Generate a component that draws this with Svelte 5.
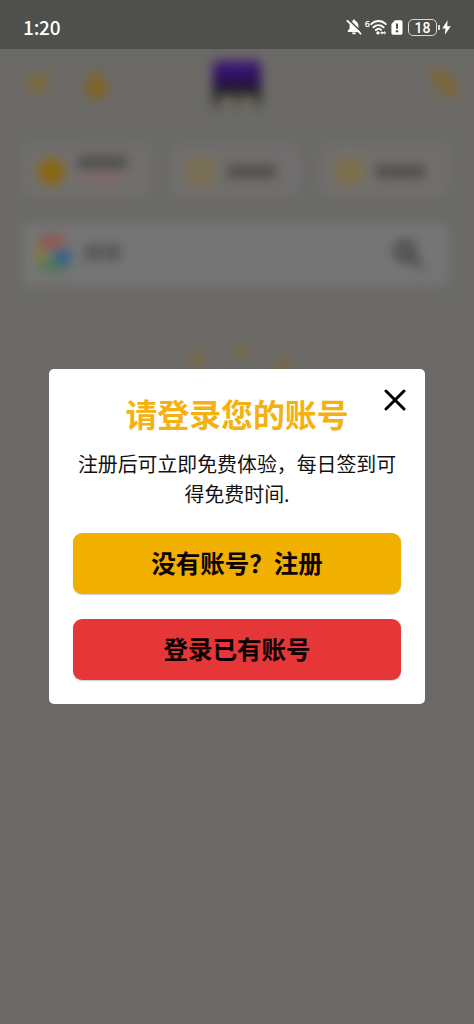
<script>
  // 快捷入口卡片
  const cards = [
    { icon: 'coin', sub: true },
    { icon: 'grid', sub: false },
    { icon: 'share', sub: false },
  ];

  let open = true;
</script>

<div class="screen">
  <!-- 状态栏 -->
  <header class="status">
    <span class="time">1:20</span>
    <div class="status_icons">
      <svg class="mute" width="16" height="16" viewBox="0 0 16 16">
        <path d="M1.8 13V11.6L3.6 9.8V6.5C3.6 4 5 2.4 6.8 1.9V1.4C6.8.2 9.2.2 9.2 1.4V1.9C11 2.4 12.4 4 12.4 6.5V9.8L14.2 11.6V13Z" fill="#fff" />
        <path d="M5.8 13.6H10.2C9.8 16 6.2 16 5.8 13.6Z" fill="#fff" />
        <path d="M2.6 .6L15.6 13.2" stroke="#4f4f4b" stroke-width="1.7" />
        <path d="M1.4 1.8L14.6 14.6" stroke="#fff" stroke-width="1.8" stroke-linecap="round" />
      </svg>
      <span class="six">6</span>
      <svg class="wifi" width="17" height="16" viewBox="0 0 17 16" fill="none" stroke="#fff" stroke-width="2" stroke-linecap="round">
        <path d="M1.2 5.1C5.4 1 11.6 1 15.8 5.1" />
        <path d="M3.4 8.3C6.4 5.4 10.6 5.4 13.6 8.3" />
        <path d="M5.9 11C7.4 9.6 9.6 9.6 11 10.8" />
        <circle cx="8" cy="13.9" r="1.7" fill="#fff" stroke="none" />
        <path d="M10.2 13.8L12.3 11.9V15.7ZM16.2 13.8L14.1 11.9V15.7ZM12 13H14.4V14.6H12Z" fill="#fff" stroke="none" />
      </svg>
      <svg class="sim" width="12" height="15" viewBox="0 0 12 15">
        <path d="M4 .2H10Q11.5.2 11.5 1.8V13Q11.5 14.7 10 14.7H2Q.4 14.7.4 13V4Z" fill="#fff" />
        <path d="M6 3.6V8.8" stroke="#4f4f4b" stroke-width="2" />
        <circle cx="6" cy="11.2" r="1.2" fill="#4f4f4b" />
      </svg>
      <span class="battery">18</span>
      <span class="battery_tip"></span>
      <svg class="bolt" width="9" height="15" viewBox="0 0 9 15">
        <path d="M5.6 .2L.2 8.5H3.5L2.9 14.8L8.8 6.2H5.2Z" fill="#fff" />
      </svg>
    </div>
  </header>

  <!-- 弹窗后面的模糊页面 -->
  <main class="page" aria-hidden="true">
    <div class="topbar">
      <svg class="menu" width="28" height="24" viewBox="0 0 28 24" stroke="#80682f" stroke-width="4.5">
        <path d="M4 6H24M3 12H25M5 18H22" />
      </svg>
      <svg class="person" width="28" height="32" viewBox="0 0 28 32" fill="#806322">
        <path d="M10 2L18 4L20 12L26 19V26L20 30H9L4 25V18L8 13Z" />
      </svg>
      <div class="logo"><i></i><i></i></div>
      <svg class="scan" width="32" height="32" viewBox="0 0 32 32" fill="#7d6637">
        <path d="M3 2H16L30 15V30H20L14 22L6 17Z" />
      </svg>
    </div>

    <div class="cards">
      {#each cards as card}
        <div class="card">
          <span class="card_icon {card.icon}"></span>
          <div class="card_lines">
            <i class="line"></i>
            {#if card.sub}<i class="line sub"></i>{/if}
          </div>
        </div>
      {/each}
    </div>

    <div class="search">
      <svg width="38" height="38" viewBox="0 0 38 38" fill="none" stroke-width="10">
        <path d="M7 13A13.5 13.5 0 0 1 29 10" stroke="#985049" />
        <path d="M7 12A14 14 0 0 0 8 28" stroke="#887a43" />
        <path d="M8 27A14 14 0 0 0 28 29" stroke="#4b7750" />
        <path d="M20 21H32A14 14 0 0 1 28 29" stroke="#2f5f8e" />
      </svg>
      <div class="hint"><i></i><i></i></div>
      <svg class="magnifier" width="34" height="34" viewBox="0 0 34 34" stroke="#4a4846" stroke-width="5">
        <circle cx="15" cy="14" r="9" fill="#62605d" />
        <path d="M21 20L32 31" stroke-width="6" />
      </svg>
    </div>

    <div class="dots"><i></i><i></i><i></i></div>
  </main>

  <!-- 登录弹窗 -->
  {#if open}
    <div class="overlay">
      <section class="modal">
        <button class="close" aria-label="关闭" on:click={() => (open = false)}>
          <svg width="22" height="22" viewBox="0 0 22 22" stroke="#000" stroke-width="3" stroke-linecap="round">
            <path d="M2 2L20 20M20 2L2 20" />
          </svg>
        </button>
        <h1>请登录您的账号</h1>
        <p>注册后可立即免费体验，每日签到可得免费时间.</p>
        <button class="action register">没有账号？注册</button>
        <button class="action login">登录已有账号</button>
      </section>
    </div>
  {/if}
</div>

<style>
  :global(body) {
    margin: 0;
    background: #6b6a67;
  }

  .screen {
    position: relative;
    width: 474px;
    height: 1024px;
    overflow: hidden;
    background: #6b6a67;
    font-family: "Noto Sans", "Noto Sans CJK SC", sans-serif;
  }

  .status {
    display: flex;
    justify-content: space-between;
    align-items: center;
    box-sizing: border-box;
    height: 49px;
    padding: 5px 23px 0 23px;
    background: #4f4f4b;
    color: #fff;
  }

  .time {
    font-family: "Noto Sans CJK SC", sans-serif;
    font-size: 19px;
    font-weight: 500;
    line-height: 20px;
    letter-spacing: -0.2px;
  }

  .status_icons {
    display: flex;
    align-items: center;
  }

  .six {
    align-self: flex-start;
    margin-left: 3px;
    font-size: 9px;
    font-weight: 600;
    line-height: 9px;
  }

  .sim {
    margin: 0 5px 0 4px;
  }

  .battery {
    box-sizing: border-box;
    width: 29px;
    height: 17px;
    border: 1.5px solid #d8d8d6;
    border-radius: 5px;
    font-family: Roboto, sans-serif;
    font-size: 14px;
    font-weight: 500;
    line-height: 16px;
    text-align: center;
  }

  .battery_tip {
    width: 2px;
    height: 5px;
    margin: 0 2px 0 1px;
    background: #d8d8d6;
  }

  /* 背景页面 */
  .page {
    padding: 0 25px 0 22px;
    filter: blur(5.5px);
  }

  .topbar {
    display: flex;
    height: 94px;
  }

  .menu {
    margin: 22px 0 0 2px;
  }

  .person {
    margin: 19px 0 0 30px;
  }

  .logo {
    display: flex;
    justify-content: space-around;
    align-items: flex-end;
    box-sizing: border-box;
    width: 48px;
    height: 50px;
    margin: 11px 0 0 103px;
    padding: 0 4px;
    border-radius: 6px;
    background: linear-gradient(#43217a 0%, #2a0b5b 42%, #211c2a 55%, #24231f 70%, #504d4c 100%);
  }

  .logo i {
    width: 17px;
    height: 15px;
    background: #6b695f;
  }

  .scan {
    margin: 18px -10px 0 auto;
  }

  .cards {
    display: grid;
    grid-template-columns: repeat(3, 1fr);
    gap: 20px;
  }

  .card {
    display: flex;
    align-items: center;
    box-sizing: border-box;
    height: 54px;
    padding: 2px 16px 0 16px;
    border-radius: 6px;
    background: #716f6e;
  }

  .card_icon {
    box-sizing: border-box;
    flex: none;
    width: 27px;
    height: 27px;
    border: 5px solid #80714a;
    border-radius: 6px;
    background: #777059;
  }

  .coin {
    border-color: #8a6610;
    border-radius: 50%;
    background: #8a6610;
  }

  .share {
    background: #79704a;
  }

  .card_lines {
    display: flex;
    flex-direction: column;
    align-items: center;
    gap: 5px;
    margin-left: 13px;
  }

  .line {
    width: 49px;
    height: 13px;
    background: #504f4d;
  }

  .coin + .card_lines {
    margin-top: -4px;
  }

  .sub {
    width: 40px;
    height: 8px;
    background: #856866;
  }

  .search {
    display: flex;
    align-items: center;
    box-sizing: border-box;
    height: 62px;
    margin-top: 26px;
    padding: 0 25px 0 12px;
    border-radius: 6px;
    background: #757575;
  }

  .hint {
    display: flex;
    gap: 3px;
    margin: 0 auto 3px 13px;
  }

  .hint i {
    width: 16px;
    height: 17px;
    background: #595858;
  }

  .dots {
    display: flex;
    justify-content: space-between;
    width: 102px;
    margin: 59px 0 0 168px;
  }

  .dots i {
    width: 16px;
    height: 15px;
    margin-top: 8px;
    border-radius: 50%;
    background: #7b6640;
  }

  .dots i:nth-child(2) {
    margin-top: 0;
    background: #756a42;
  }

  .dots i:nth-child(3) {
    margin-top: 13px;
  }

  /* 弹窗 */
  .overlay {
    position: absolute;
    inset: 49px 0 0;
    display: flex;
    justify-content: center;
    align-items: center;
  }

  .modal {
    position: relative;
    box-sizing: border-box;
    width: 376px;
    height: 335px;
    padding: 23px 24px 24px;
    border-radius: 5px;
    background: #fff;
    text-align: center;
  }

  .close {
    position: absolute;
    top: 20px;
    right: 19px;
    display: flex;
    padding: 0;
    border: none;
    background: none;
    cursor: pointer;
  }

  h1 {
    margin: 0;
    color: #f4b110;
    font-size: 31.9px;
    font-weight: 700;
    line-height: 45px;
  }

  p {
    margin: 13px 0 24px;
    color: #111;
    font-size: 19.9px;
    line-height: 29.5px;
  }

  .action {
    display: block;
    width: 100%;
    height: 61px;
    margin: 0;
    padding: 0 0 3px;
    border: none;
    border-radius: 9px;
    box-shadow: 0 1px 1px rgba(0, 0, 0, 0.2);
    color: #0c0202;
    font-family: inherit;
    font-size: 24.5px;
    font-weight: 700;
    cursor: pointer;
  }

  .register {
    background: #f1af00;
  }

  .login {
    margin-top: 25px;
    background: #e53638;
  }
</style>
